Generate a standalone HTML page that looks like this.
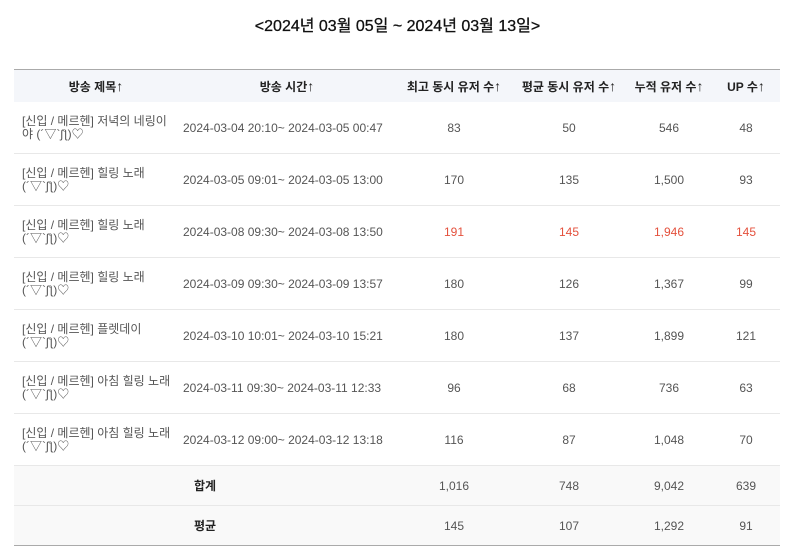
<!DOCTYPE html>
<html><head><meta charset="utf-8"><style>
body{margin:0;background:#fff;font-family:"Liberation Sans","Noto Sans CJK KR",sans-serif;color:#555;width:800px;height:556px;overflow:hidden}
h1{position:absolute;top:15px;left:0;width:795px;text-align:center;font-size:16px;font-weight:normal;color:#111;margin:0;line-height:24px;-webkit-text-stroke:0.3px #111}
table{position:absolute;top:69px;left:14px;width:766px;border-collapse:collapse;table-layout:fixed;font-size:12px}
thead tr{background:#f4f6fa;border-top:1px solid #aaa}
th{height:32px;font-weight:bold;color:#222;text-align:center;padding:0;font-size:12px}
th span{font-size:14px;font-weight:normal}
td{text-align:center;padding:0;border-bottom:1px solid #e8e8e8}
tbody tr.d td{height:51px}
td.t{text-align:left;padding-left:8px;padding-right:0;line-height:13px;color:#555;white-space:nowrap;overflow:hidden}
td.tm{text-align:left;padding-left:5px;color:#555}
td.n{color:#555}
.r td.n{color:#e4513d}
tr.s{background:#f9f9f9}
tr.s td{height:39px;color:#555}
tr.s td.l{font-weight:bold;color:#222}
tr.last td{border-bottom:1px solid #aaa}
</style></head><body>
<h1>&lt;2024년 03월 05일 ~ 2024년 03월 13일&gt;</h1>
<table>
<colgroup><col style="width:164px"><col style="width:218px"><col style="width:116px"><col style="width:114px"><col style="width:86px"><col style="width:68px"></colgroup>
<thead><tr><th>방송 제목<span>↑</span></th><th>방송 시간<span>↑</span></th><th>최고 동시 유저 수<span>↑</span></th><th>평균 동시 유저 수<span>↑</span></th><th>누적 유저 수<span>↑</span></th><th>UP 수<span>↑</span></th></tr></thead>
<tbody>
<tr class="d"><td class="t">[신입 / 메르헨] 저녁의 네링이<br>야 (´▽`ʃƪ)♡</td><td class="tm">2024-03-04 20:10~ 2024-03-05 00:47</td><td class="n">83</td><td class="n">50</td><td class="n">546</td><td class="n">48</td></tr>
<tr class="d"><td class="t">[신입 / 메르헨] 힐링 노래<br>(´▽`ʃƪ)♡</td><td class="tm">2024-03-05 09:01~ 2024-03-05 13:00</td><td class="n">170</td><td class="n">135</td><td class="n">1,500</td><td class="n">93</td></tr>
<tr class="d r"><td class="t">[신입 / 메르헨] 힐링 노래<br>(´▽`ʃƪ)♡</td><td class="tm">2024-03-08 09:30~ 2024-03-08 13:50</td><td class="n">191</td><td class="n">145</td><td class="n">1,946</td><td class="n">145</td></tr>
<tr class="d"><td class="t">[신입 / 메르헨] 힐링 노래<br>(´▽`ʃƪ)♡</td><td class="tm">2024-03-09 09:30~ 2024-03-09 13:57</td><td class="n">180</td><td class="n">126</td><td class="n">1,367</td><td class="n">99</td></tr>
<tr class="d"><td class="t">[신입 / 메르헨] 플렛데이<br>(´▽`ʃƪ)♡</td><td class="tm">2024-03-10 10:01~ 2024-03-10 15:21</td><td class="n">180</td><td class="n">137</td><td class="n">1,899</td><td class="n">121</td></tr>
<tr class="d"><td class="t">[신입 / 메르헨] 아침 힐링 노래<br>(´▽`ʃƪ)♡</td><td class="tm">2024-03-11 09:30~ 2024-03-11 12:33</td><td class="n">96</td><td class="n">68</td><td class="n">736</td><td class="n">63</td></tr>
<tr class="d"><td class="t">[신입 / 메르헨] 아침 힐링 노래<br>(´▽`ʃƪ)♡</td><td class="tm">2024-03-12 09:00~ 2024-03-12 13:18</td><td class="n">116</td><td class="n">87</td><td class="n">1,048</td><td class="n">70</td></tr>
<tr class="s"><td colspan="2" class="l">합계</td><td>1,016</td><td>748</td><td>9,042</td><td>639</td></tr>
<tr class="s last"><td colspan="2" class="l">평균</td><td>145</td><td>107</td><td>1,292</td><td>91</td></tr>
</tbody></table>
</body></html>
